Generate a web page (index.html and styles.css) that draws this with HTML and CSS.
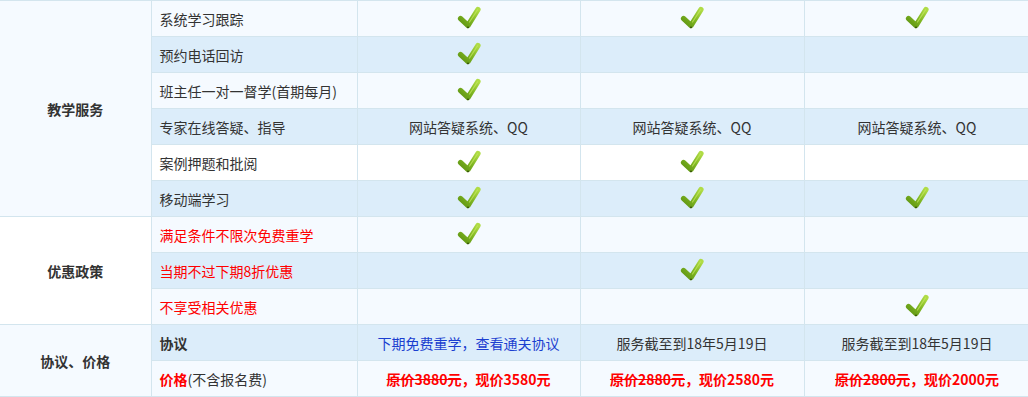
FILE: index.html
```html
<!DOCTYPE html>
<html lang="zh">
<head>
<meta charset="utf-8">
<link rel="stylesheet" href="styles.css">
</head>
<body>
<svg class="defs" width="0" height="0" aria-hidden="true">
  <defs>
    <linearGradient id="g" x1="0" y1="1" x2="1" y2="0">
      <stop offset="0" stop-color="#5e9412"/>
      <stop offset="0.5" stop-color="#7fb623"/>
      <stop offset="1" stop-color="#b0dc46"/>
    </linearGradient>
    <symbol id="chk" viewBox="0 0 24 23">
      <polyline points="3.5,12.5 11,19.5 21,3.5" fill="none" stroke="url(#g)" stroke-width="5.2" stroke-linecap="round" stroke-linejoin="round"/>
      <polyline points="12.5,16 20.5,3.8" fill="none" stroke="#c4e85e" stroke-width="1.2" stroke-linecap="round" opacity="0.7"/>
      <circle cx="11" cy="21.3" r="0.9" fill="#2f4a08"/>
    </symbol>
  </defs>
</svg>
<table class="cmp">
  <colgroup>
    <col class="c1"><col class="c2"><col class="c3"><col class="c4"><col class="c5">
  </colgroup>
  <tbody>
    <tr class="light">
      <th rowspan="6" class="grp g-light">教学服务</th>
      <td class="item">系统学习跟踪</td>
      <td><svg class="ck"><use href="#chk"/></svg></td>
      <td><svg class="ck"><use href="#chk"/></svg></td>
      <td><svg class="ck"><use href="#chk"/></svg></td>
    </tr>
    <tr class="blue">
      <td class="item">预约电话回访</td>
      <td><svg class="ck"><use href="#chk"/></svg></td>
      <td></td>
      <td></td>
    </tr>
    <tr class="light">
      <td class="item">班主任一对一督学(首期每月)</td>
      <td><svg class="ck"><use href="#chk"/></svg></td>
      <td></td>
      <td></td>
    </tr>
    <tr class="blue">
      <td class="item">专家在线答疑、指导</td>
      <td>网站答疑系统、QQ</td>
      <td>网站答疑系统、QQ</td>
      <td>网站答疑系统、QQ</td>
    </tr>
    <tr class="white">
      <td class="item">案例押题和批阅</td>
      <td><svg class="ck"><use href="#chk"/></svg></td>
      <td><svg class="ck"><use href="#chk"/></svg></td>
      <td></td>
    </tr>
    <tr class="blue">
      <td class="item">移动端学习</td>
      <td><svg class="ck"><use href="#chk"/></svg></td>
      <td><svg class="ck"><use href="#chk"/></svg></td>
      <td><svg class="ck"><use href="#chk"/></svg></td>
    </tr>
    <tr class="light">
      <th rowspan="3" class="grp g-white">优惠政策</th>
      <td class="item red">满足条件不限次免费重学</td>
      <td><svg class="ck"><use href="#chk"/></svg></td>
      <td></td>
      <td></td>
    </tr>
    <tr class="blue">
      <td class="item red">当期不过下期8折优惠</td>
      <td></td>
      <td><svg class="ck"><use href="#chk"/></svg></td>
      <td></td>
    </tr>
    <tr class="light">
      <td class="item red">不享受相关优惠</td>
      <td></td>
      <td></td>
      <td><svg class="ck"><use href="#chk"/></svg></td>
    </tr>
    <tr class="blue">
      <th rowspan="2" class="grp g-light">协议、价格</th>
      <td class="item"><b>协议</b></td>
      <td><a class="link" href="#">下期免费重学，查看通关协议</a></td>
      <td>服务截至到18年5月19日</td>
      <td>服务截至到18年5月19日</td>
    </tr>
    <tr class="light">
      <td class="item"><b class="red">价格</b>(不含报名费)</td>
      <td class="price"><s>原价3880元</s>，现价3580元</td>
      <td class="price"><s>原价2880元</s>，现价2580元</td>
      <td class="price"><s>原价2800元</s>，现价2000元</td>
    </tr>
  </tbody>
</table>
</body>
</html>
```

FILE: styles.css
```css
html, body {
  margin: 0;
  padding: 0;
  background: #ffffff;
}
body {
  font-family: "Noto Sans CJK SC", "Microsoft YaHei", sans-serif;
  font-size: 14px;
  color: #333333;
  overflow: hidden;
}
.defs {
  position: absolute;
  width: 0;
  height: 0;
}
.cmp {
  border-collapse: collapse;
  table-layout: fixed;
  width: 1030px;
}
.c1 { width: 151px; }
.c2 { width: 206px; }
.c3 { width: 223px; }
.c4 { width: 224px; }
.c5 { width: 226px; }
.cmp th,
.cmp td {
  border: 1px solid #d3e5ee;
  height: 35px;
  padding: 0;
  text-align: center;
  vertical-align: middle;
  line-height: 20px;
  white-space: nowrap;
}
.cmp tr:first-child th,
.cmp tr:first-child td {
  border-top-color: #d3e5ee;
}
.cmp th.grp {
  border-left: none;
  font-weight: bold;
  color: #333333;
}
.g-light { background: #f5faff; }
.g-white { background: #ffffff; }
.light td { background: #f5faff; }
.white td { background: #ffffff; }
.blue td { background: #dcedfa; }
.cmp td.item {
  text-align: left;
  padding-left: 8px;
}
.red { color: #ff0000; }
b { font-weight: bold; }
.link {
  color: #1b3fd0;
  text-decoration: none;
}
.price {
  color: #ff0000;
  font-weight: bold;
}
.price s {
  text-decoration: line-through;
}
.ck {
  width: 24px;
  height: 23px;
  display: block;
  margin: 0 auto;
  position: relative;
  top: -1px;
}
```
